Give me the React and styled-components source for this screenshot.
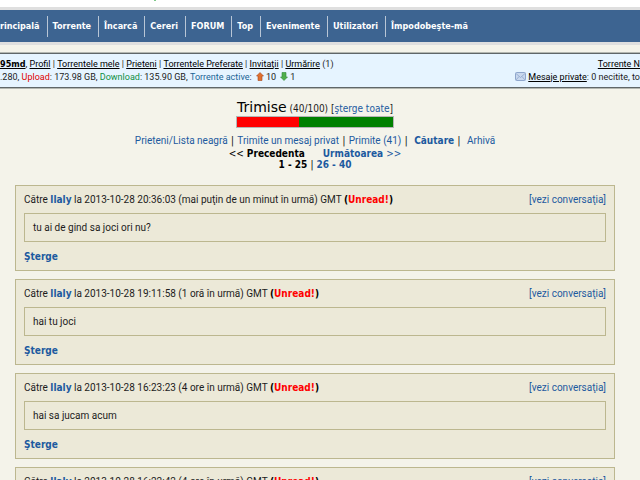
import React from 'react';
import styled, { createGlobalStyle, css } from 'styled-components';

const condensed = css`
  font-family: 'DejaVu Sans Condensed', 'DejaVu Sans', sans-serif;
  font-stretch: condensed;
`;

const GlobalStyle = createGlobalStyle`
  body {
    margin: 0;
    background-color: #f4f3ea;
    color: #1c1c1c;
    font-family: Roboto, sans-serif;
    font-size: 10px;
    line-height: 14px;
  }
`;

const Page = styled.div`
  height: 100vh;
  overflow: hidden;
`;

const Banner = styled.div`
  height: 7px;
  background-color: #fff;
`;

const BannerMark = styled.div`
  width: 2px;
  height: 1px;
  margin-left: 154px;
  background-color: #7fc98a;
`;

const Nav = styled.nav`
  display: flex;
  align-items: center;
  height: 32px;
  border-top: 3px solid #dfdfdf;
  border-bottom: 3px solid #dfdfdf;
  background-color: #3d6491;
`;

const NavLink = styled.a`
  ${condensed}
  padding: 0 7px 0 5px;
  border-left: 1px solid #b9c6d6;
  color: #fff;
  font-size: 9px;
  font-weight: bold;
  line-height: 21px;
  text-decoration: none;

  &:first-child {
    margin-left: -11px;
    border-left: none;
  }
`;

const UserBar = styled.header`
  display: flex;
  justify-content: space-between;
  margin-top: 8px;
  padding: 3px 0 4px;
  border-top: 1px solid #5f6668;
  border-bottom: 1px solid #5f6668;
  background-color: #e6f4ff;
  box-shadow: 0 0 0 1px #b4b7b1;
  font-size: 9px;
  white-space: pre;
`;

const UserLine = styled.div`
  display: flex;
  justify-content: ${(props) => (props.$end ? 'flex-end' : 'flex-start')};
  align-items: center;
  height: 13px;
`;

const UserLink = styled.a`
  color: #000;
  text-decoration: underline;
  ${(props) => props.$bold && css`
    ${condensed}
    font-weight: bold;
  `}
`;

const Label = styled.span`
  color: ${(props) => props.$color};
`;

const Icon = styled.svg`
  flex: none;
  margin: 0 2px;
`;

const Main = styled.main`
  padding: 12px 25px 0 15px;
`;

const Link = styled.a`
  color: #1d5a9f;
  text-decoration: none;
  ${(props) => props.$bold && css`
    ${condensed}
    font-weight: bold;
  `}
`;

const Heading = styled.div`
  ${condensed}
  text-align: center;
`;

const Title = styled.h1`
  display: inline;
  margin: 0;
  color: #000;
  font-family: 'DejaVu Sans', sans-serif;
  font-stretch: normal;
  font-size: 14px;
  font-weight: normal;
`;

const Quota = styled.div`
  width: 156px;
  height: 10px;
  margin: 0 auto;
  border: 1px solid #b5b5b5;
  background-color: #008000;
`;

const QuotaUsed = styled.div`
  height: 100%;
  background-color: #f00;
`;

const Folders = styled.div`
  display: flex;
  justify-content: center;
  margin-top: 6px;
  white-space: pre;
`;

const Separator = styled.span`
  font-family: 'DejaVu Sans', sans-serif;
`;

const Pager = styled.div`
  ${condensed}
  color: #000;
  font-weight: bold;
  line-height: 11px;
`;

const PagerRow = styled.div`
  display: flex;
  justify-content: center;
  gap: ${(props) => props.$gap || 0}px;
  white-space: pre;
`;

const Arrow = styled.span`
  font-weight: normal;
`;

const Messages = styled.section`
  display: flex;
  flex-direction: column;
  gap: 8px;
  margin-top: 15px;
`;

const Card = styled.article`
  padding: 7px 8px 6px;
  border: 1px solid #bcb78f;
  background-color: #ece9d8;
`;

const CardHeader = styled.div`
  display: flex;
  justify-content: space-between;
`;

const Status = styled.b`
  ${condensed}
  color: #000;
`;

const Unread = styled.span`
  color: #f00;
`;

const Body = styled.p`
  margin: 6px 0 8px;
  padding: 7px 8px 6px;
  border: 1px solid #bcb78f;
`;

const navItems = ['Principală', 'Torrente', 'Încarcă', 'Cereri', 'FORUM', 'Top', 'Evenimente', 'Utilizatori', 'Împodobeşte-mă'];

const userLinks = ['Profil', 'Torrentele mele', 'Prieteni', 'Torrentele Preferate', 'Invitaţii', 'Urmărire'];

const messages = [
  { time: '2013-10-28 20:36:03', ago: 'mai puţin de un minut în urmă', text: 'tu ai de gind sa joci ori nu?' },
  { time: '2013-10-28 19:11:58', ago: '1 oră în urmă', text: 'hai tu joci' },
  { time: '2013-10-28 16:23:23', ago: '4 ore în urmă', text: 'hai sa jucam acum' },
  { time: '2013-10-28 16:22:42', ago: '4 ore în urmă', text: '' },
];

const ArrowIcon = ({ down }) => (
  <Icon width="8" height="9" viewBox="0 0 8 9">
    <path
      d="M4 0.5 L7.5 4 H6 V8.5 H2 V4 H0.5 Z"
      fill={down ? '#4fae4b' : '#e0702f'}
      stroke={down ? '#2f8a3a' : '#a8481c'}
      strokeWidth="0.6"
      transform={down ? 'rotate(180 4 4.5)' : undefined}
    />
  </Icon>
);

const MailIcon = () => (
  <Icon width="11" height="9" viewBox="0 0 11 9">
    <rect x="0.5" y="0.5" width="10" height="8" rx="1" fill="#c9d8ee" stroke="#8ea6cc" />
    <path d="M1 1.5 L5.5 5.5 L10 1.5 M1 8 L4 4.5 M10 8 L7 4.5" fill="none" stroke="#8ea6cc" strokeWidth="0.8" />
  </Icon>
);

const Message = ({ message }) => (
  <Card>
    <CardHeader>
      <span>
        Către <Link href="#" $bold>llaly</Link> la {message.time} ({message.ago}) GMT <Status>(<Unread>Unread!</Unread>)</Status>
      </span>
      <Link href="#">[vezi conversaţia]</Link>
    </CardHeader>
    <Body>{message.text}</Body>
    <Link href="#" $bold>Şterge</Link>
  </Card>
);

const App = () => {
  return (
    <Page>
      <GlobalStyle />
      <Banner>
        <BannerMark />
      </Banner>
      <Nav>
        {navItems.map((item) => (
          <NavLink href="#" key={item}>{item}</NavLink>
        ))}
      </Nav>
      <UserBar>
        <div>
          <UserLine>
            <UserLink href="#" $bold>95md</UserLink>,{' '}
            {userLinks.map((item, i) => (
              <React.Fragment key={item}>
                {i > 0 && ' | '}
                <UserLink href="#">{item}</UserLink>
              </React.Fragment>
            ))}
            {' (1)'}
          </UserLine>
          <UserLine>
            .280, <Label $color="#e00000">Upload</Label>: 173.98 GB, <Label $color="#0f8f3f">Download</Label>: 135.90 GB,{' '}
            <Label $color="#1a6496">Torrente active</Label>: <ArrowIcon />10 <ArrowIcon down />1
          </UserLine>
        </div>
        <div>
          <UserLine $end><UserLink href="#">Torrente N</UserLink></UserLine>
          <UserLine $end>
            <MailIcon />
            <UserLink href="#">Mesaje private</UserLink>: 0 necitite, to
          </UserLine>
        </div>
      </UserBar>
      <Main>
        <Heading>
          <Title>Trimise</Title> (40/100) [<Link href="#">şterge toate</Link>]
        </Heading>
        <Quota>
          <QuotaUsed style={{ width: '40%' }} />
        </Quota>
        <Folders>
          <Link href="#">Prieteni/Lista neagră</Link>
          <Separator>{' | '}</Separator>
          <Link href="#">Trimite un mesaj privat</Link>
          <Separator>{' | '}</Separator>
          <Link href="#">Primite (41)</Link>
          <Separator>{' |  '}</Separator>
          <Link href="#" $bold>Căutare</Link>
          <Separator>{' |  '}</Separator>
          <Link href="#">Arhivă</Link>
        </Folders>
        <Pager>
          <PagerRow $gap={18}>
            <span><Arrow>&lt;&lt;</Arrow> Precedenta</span>
            <Link href="#" $bold>Următoarea <Arrow>&gt;&gt;</Arrow></Link>
          </PagerRow>
          <PagerRow>
            {'1 - 25 '}<Arrow>{'| '}</Arrow><Link href="#" $bold>26 - 40</Link>
          </PagerRow>
        </Pager>
        <Messages>
          {messages.map((message) => (
            <Message key={message.time} message={message} />
          ))}
        </Messages>
      </Main>
    </Page>
  );
};

export default App;
